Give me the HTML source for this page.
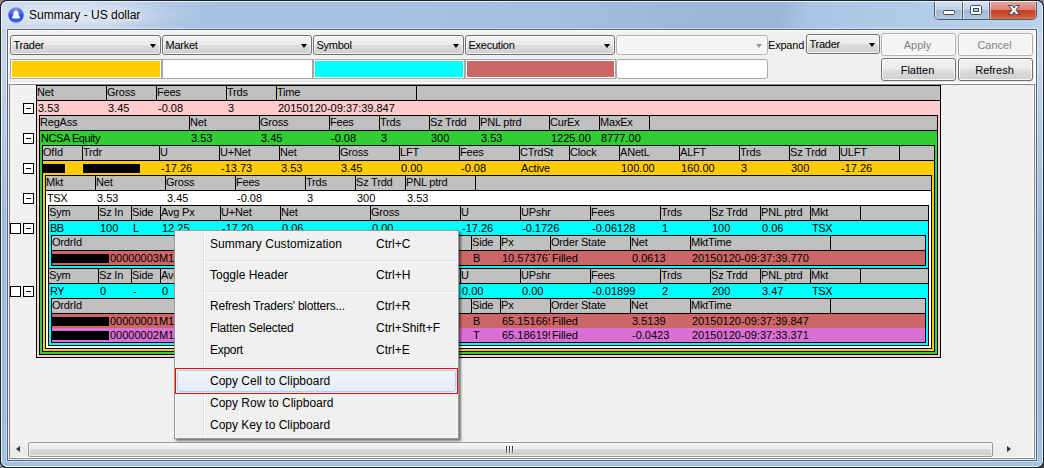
<!DOCTYPE html><html><head><meta charset="utf-8"><title>Summary - US dollar</title><style>html,body{margin:0;padding:0;background:#888;}
body{width:1044px;height:468px;overflow:hidden;position:relative;font-family:"Liberation Sans",sans-serif;}
#win{position:absolute;left:0;top:0;width:1044px;height:468px;box-sizing:border-box;border-radius:7px;overflow:hidden;background:linear-gradient(#c3d6ea 0,#c3d6ea 60px,#9bb9d9 230px,#9bb9d9 400px,#a5c3e3 100%);}
#tbar{left:0;top:0;width:1044px;height:29px;background:linear-gradient(100deg,#ccdbed 0px,#c6d7eb 110px,#b2c9e5 160px,#a8c3e2 200px,#a6c1e1 420px,#a3bfe0 560px,#9bb8d9 680px,#9ab7d8 770px,#a9c5e4 800px,#b2cbe7 900px,#bcd2ea 1044px);}
#win>*{position:absolute;}
#ob{left:0;top:0;width:1042px;height:466px;border:1px solid #1a222c;border-radius:7px;}
#hl{left:1px;top:1px;width:1040px;height:464px;border:1px solid rgba(255,255,255,.75);border-radius:6px;pointer-events:none;}
#client{left:7px;top:29px;width:1028px;height:430px;border:1px solid #56627a;background:#f0f0f0;box-shadow:0 0 0 1px rgba(255,255,255,.45);}
#tool{left:8px;top:30px;width:1028px;height:54px;background:#fff;}
#tool i{position:absolute;left:1px;top:1px;width:1025px;height:50px;background:#f0f0f0;border-bottom:1px solid #dde4ea;}
#title{left:29px;top:8px;font-size:12px;line-height:15px;color:#000;white-space:nowrap;text-shadow:0 0 6px rgba(255,255,255,.8),0 0 10px rgba(255,255,255,.6);}
#glow{left:-9px;top:1px;width:200px;height:28px;background:radial-gradient(ellipse at 40% 50%,rgba(255,255,255,.42),rgba(255,255,255,0) 72%);}
#icon{left:8px;top:7px;width:16px;height:16px;}
#ctl{left:934px;top:1px;width:103px;height:19px;box-sizing:border-box;border:1px solid #4d5a6b;border-top:none;border-radius:0 0 5px 5px;overflow:hidden;}
#ctl>div{position:absolute;top:0;height:19px;box-sizing:border-box;box-shadow:inset 1px 0 0 rgba(255,255,255,.55),inset -1px -1px 0 rgba(255,255,255,.35);}
#cmin{left:0;width:28px;border-right:1px solid #4d5a6b;background:linear-gradient(#d5e1f0 0,#c0d1e6 45%,#a2b8d3 50%,#b5c9e2 100%);}
#cmax{left:28px;width:27px;border-right:1px solid #4d5a6b;background:linear-gradient(#d5e1f0 0,#c0d1e6 45%,#a2b8d3 50%,#b5c9e2 100%);}
#ccls{left:55px;width:46px;background:linear-gradient(#e9aaa0 0,#d98474 45%,#c43d24 50%,#d2553a 80%,#dd8265 100%);}
#ctl svg{position:absolute;left:0;top:0;}
#panel{left:9px;top:84px;width:1024px;height:373px;border:1px solid #828790;background:#f0f0f0;box-shadow:inset -1px -1px 0 #fff;}
.combo{box-sizing:border-box;border:1px solid #707070;border-radius:3px;background:linear-gradient(#f2f2f2 0,#ebebeb 48%,#dddddd 52%,#cfcfcf 100%);font-size:11px;color:#000;box-shadow:inset 0 0 0 1px rgba(255,255,255,.7);}
.combo span{position:absolute;left:2.5px;top:2px;line-height:14px;white-space:nowrap;letter-spacing:-0.25px;}
.combo .arr{position:absolute;right:4px;top:8px;width:0;height:0;border-left:3.5px solid transparent;border-right:3.5px solid transparent;border-top:4px solid #000;}
.combo.sm .arr{top:8px;}
.combo.sm span{top:2px;}
.combo.dis{background:#f4f4f4;border-color:#adb2b5;}
.combo.dis .arr{border-top-color:#9a9a9a;right:5.5px;}
.lbl{font-size:11px;line-height:14px;color:#000;letter-spacing:-0.2px;}
.sw{top:59px;height:20px;box-sizing:border-box;border:1px solid #a8a8a8;box-shadow:inset 0 0 0 1px #fff;}
.btn{box-sizing:border-box;border:1px solid #707070;border-radius:3px;background:linear-gradient(#f2f2f2 0,#ebebeb 48%,#dddddd 52%,#cfcfcf 100%);font-size:11px;text-align:center;color:#000;padding-right:2px;box-shadow:inset 0 0 0 1px rgba(255,255,255,.8);}
.btn.dis{background:#f4f4f4;border-color:#adb2b5;color:#838383;}
/* grid */
.tbl{box-sizing:border-box;border:1px solid #000;font-size:11px;color:#000;}
.hdr{height:14px;background:#c0c0c0;border-bottom:1px solid #000;position:relative;overflow:hidden;}
.hdr.nt{border-top:1px solid #000;}
.row{height:14px;position:relative;overflow:hidden;}
.child{padding:0 2px 2px 2px;}
.hc,.dc{position:absolute;top:0;height:14px;line-height:14px;white-space:nowrap;overflow:hidden;box-sizing:border-box;padding-left:1px;}
.hc{top:-1px;padding-left:0;letter-spacing:-0.2px;}
.sep{position:absolute;top:0;width:1px;height:14px;background:#000;}
.red{position:absolute;top:3px;height:9px;background:#000;}
.bx{width:11px;height:11px;box-sizing:border-box;border:1px solid #000;background:#fff;}
.bx i{position:absolute;left:2px;top:4px;width:5px;height:1px;background:#000;}
/* menu */
.menu{left:174px;top:230px;width:285px;height:209px;box-sizing:border-box;border:1px solid #979797;background:#f0f0f0;box-shadow:2px 2px 2px rgba(0,0,0,.5),inset 0 0 0 1px #f8f8f8;font-size:12px;color:#000;}
.menu>*{position:absolute;}
.gut{left:28px;top:2px;width:1px;height:203px;background:#e2e3e3;border-right:1px solid #fff;}
.mi{left:2px;width:279px;height:22px;line-height:23px;box-sizing:border-box;margin-top:-231px;}
.mi .ml{position:absolute;left:33px;white-space:nowrap;}
.mi .ms{position:absolute;left:199px;white-space:nowrap;}
.mi.hot{border:1px solid #aecff7;border-radius:3px;background:linear-gradient(#f1f5fb,#e4ecf8);line-height:21px;}
.redbox{left:0px;top:137px;width:281px;height:24px;border:1px solid #f00;}
.mi.hot .ml{left:32px;}
.msep{left:30px;width:251px;height:1px;background:#e0e0e0;border-bottom:1px solid #fff;margin-top:-231px;}
/* scrollbar */
#hs{left:10px;top:441px;width:1007px;height:16px;background:linear-gradient(#f6f6f6 0,#ededed 2px,#ebebeb 100%);}
#hs>*{position:absolute;}
#thumb{left:18px;top:1px;width:965px;height:15px;box-sizing:border-box;border:1px solid #979797;border-radius:2px;background:linear-gradient(#f4f4f4 0,#ececec 45%,#d9d9d9 50%,#cdcdcd 100%);box-shadow:inset 0 0 0 1px rgba(255,255,255,.6);}
.la{left:6px;top:4.5px;width:0;height:0;border-top:3.5px solid transparent;border-bottom:3.5px solid transparent;border-right:4px solid #303030;}
.ra{left:997px;top:4.5px;width:0;height:0;border-top:3.5px solid transparent;border-bottom:3.5px solid transparent;border-left:4px solid #303030;}
.grip{left:496px;top:5px;width:8px;height:7px;background:linear-gradient(90deg,#000 0,#000 1px,#fff 1px,#fff 2px,transparent 2px,transparent 3px,#000 3px,#000 4px,#fff 4px,#fff 5px,transparent 5px,transparent 6px,#000 6px,#000 7px,#fff 7px,#fff 8px);-webkit-mask-image:linear-gradient(rgba(0,0,0,.85),rgba(0,0,0,.45));mask-image:linear-gradient(rgba(0,0,0,.85),rgba(0,0,0,.45));}

.cn{position:absolute;width:7px;height:7px;}
.cn.tl{left:0;top:0;background:radial-gradient(circle at 7px 7px,transparent 5.6px,#1a222c 6.3px,#1a222c 6.8px,#888 7.4px);}
.cn.tr{right:0;top:0;left:1037px;background:radial-gradient(circle at 0px 7px,transparent 5.6px,#1a222c 6.3px,#1a222c 6.8px,#888 7.4px);}
.cn.bl{left:0;top:461px;background:radial-gradient(circle at 7px 0px,transparent 5.6px,#1a222c 6.3px,#1a222c 6.8px,#888 7.4px);}
.cn.br{left:1037px;top:461px;background:radial-gradient(circle at 0px 0px,transparent 5.6px,#1a222c 6.3px,#1a222c 6.8px,#444 7.4px);}
</style></head><body><div id="win"><div id="tbar"></div><div id="glow"></div>
<svg id="icon" viewBox="0 0 16 16"><defs><linearGradient id="ig" x1="0" y1="0" x2="0" y2="1"><stop offset="0" stop-color="#8497ea"/><stop offset="0.45" stop-color="#3d5ce6"/><stop offset="0.6" stop-color="#2a4fe0"/><stop offset="1" stop-color="#3a70f0"/></linearGradient></defs><circle cx="8" cy="8" r="7.800" fill="url(#ig)"/><path d="M8 3.600c-1.700 0-2.500 1.500-2.600 3.200-.1 1.800-.7 2.900-1.600 3.700 0 .5.400.700 1 .700 1 0 2 .5 3.200.5s2.200-.5 3.200-.5c.6 0 1-.2 1-.700-.9-.8-1.500-1.900-1.600-3.700-.1-1.700-.9-3.200-2.600-3.200z" fill="#fff"/></svg>
<div id="title">Summary - US dollar</div>
<div id="ctl"><div id="cmin"><svg width="28" height="19"><rect x="8.500" y="9.500" width="11" height="4" rx="1" fill="#fff" stroke="#3f4a5a"/></svg></div><div id="cmax"><svg width="27" height="19"><rect x="7.500" y="4.500" width="11" height="9" rx="1" fill="#fff" stroke="#3f4a5a"/><rect x="10.500" y="7.500" width="5" height="3" fill="#b7c9e0" stroke="#3f4a5a"/></svg></div><div id="ccls"><svg width="47" height="19"><path d="M18.500 4.500h3.600l1.900 2.500 1.900-2.500h3.600l-3.600 4.500 3.600 4.500h-3.600l-1.900-2.500-1.900 2.500h-3.600l3.600-4.500z" fill="#fff" stroke="#3f4a5a" stroke-width="1"/></svg></div></div>
<div id="client"></div><div id="tool"><i></i></div><div id="ob"></div><div id="hl"></div>
<div class="combo " style="left:10px;top:35px;width:151px;height:20px"><span>Trader</span><i class="arr"></i></div><div class="combo " style="left:162px;top:35px;width:150px;height:20px"><span>Market</span><i class="arr"></i></div><div class="combo " style="left:313px;top:35px;width:151px;height:20px"><span>Symbol</span><i class="arr"></i></div><div class="combo " style="left:465px;top:35px;width:150px;height:20px"><span>Execution</span><i class="arr"></i></div><div class="combo dis " style="left:616px;top:35px;width:152px;height:20px"><span></span><i class="arr"></i></div><div class="lbl" style="left:768px;top:38px">Expand</div><div class="combo sm" style="left:806px;top:34px;width:74px;height:20px"><span>Trader</span><i class="arr"></i></div><div class="btn dis" style="left:881px;top:33px;width:75px;height:23px;line-height:23px">Apply</div><div class="btn dis" style="left:958px;top:33px;width:75px;height:23px;line-height:23px">Cancel</div><div class="btn" style="left:881px;top:58px;width:75px;height:23px;line-height:23px">Flatten</div><div class="btn" style="left:958px;top:58px;width:75px;height:23px;line-height:23px">Refresh</div><div class="sw" style="left:10px;width:152px;background:#ffcc00;border-radius:0px"></div><div class="sw" style="left:162px;width:151px;background:#ffffff;border-radius:0px"></div><div class="sw" style="left:313px;width:152px;background:#00ffff;border-radius:0px"></div><div class="sw" style="left:465px;width:151px;background:#cd6666;border-radius:0px"></div><div class="sw" style="left:616px;width:152px;background:#ffffff;border-radius:3px"></div><div id="panel"></div><div class="tbl" style="position:absolute;left:36px;top:85px;width:905px"><div class="hdr"><span class="hc" style="left:0px;width:69px">Net</span><i class="sep" style="left:69px"></i><span class="hc" style="left:70px;width:49px">Gross</span><i class="sep" style="left:119px"></i><span class="hc" style="left:120px;width:69px">Fees</span><i class="sep" style="left:189px"></i><span class="hc" style="left:190px;width:49px">Trds</span><i class="sep" style="left:239px"></i><span class="hc" style="left:240px;width:139px">Time</span><i class="sep" style="left:379px"></i></div><div class="row" style="background:#ffcccc"><span class="dc" style="left:0px;width:69px">3.53</span><span class="dc" style="left:70px;width:49px">3.45</span><span class="dc" style="left:120px;width:69px">-0.08</span><span class="dc" style="left:190px;width:49px">3</span><span class="dc" style="left:240px;width:139px">20150120-09:37:39.847</span></div><div class="child" style="background:#ffcccc"><div class="tbl"><div class="hdr"><span class="hc" style="left:0px;width:149px">RegAss</span><i class="sep" style="left:149px"></i><span class="hc" style="left:150px;width:69px">Net</span><i class="sep" style="left:219px"></i><span class="hc" style="left:220px;width:69px">Gross</span><i class="sep" style="left:289px"></i><span class="hc" style="left:290px;width:49px">Fees</span><i class="sep" style="left:339px"></i><span class="hc" style="left:340px;width:49px">Trds</span><i class="sep" style="left:389px"></i><span class="hc" style="left:390px;width:49px">Sz Trdd</span><i class="sep" style="left:439px"></i><span class="hc" style="left:440px;width:69px">PNL ptrd</span><i class="sep" style="left:509px"></i><span class="hc" style="left:510px;width:49px">CurEx</span><i class="sep" style="left:559px"></i><span class="hc" style="left:560px;width:49px">MaxEx</span><i class="sep" style="left:609px"></i></div><div class="row" style="background:#32cd32"><span class="dc" style="left:0px;width:149px;letter-spacing:-0.42px">NCSA Equity</span><span class="dc" style="left:150px;width:69px">3.53</span><span class="dc" style="left:220px;width:69px">3.45</span><span class="dc" style="left:290px;width:49px">-0.08</span><span class="dc" style="left:340px;width:49px">3</span><span class="dc" style="left:390px;width:49px">300</span><span class="dc" style="left:440px;width:69px">3.53</span><span class="dc" style="left:510px;width:49px">1225.00</span><span class="dc" style="left:560px;width:49px">8777.00</span></div><div class="child" style="background:#32cd32"><div class="tbl"><div class="hdr"><span class="hc" style="left:0px;width:39px">OfId</span><i class="sep" style="left:39px"></i><span class="hc" style="left:40px;width:76px">Trdr</span><i class="sep" style="left:116px"></i><span class="hc" style="left:117px;width:59px">U</span><i class="sep" style="left:176px"></i><span class="hc" style="left:177px;width:59px">U+Net</span><i class="sep" style="left:236px"></i><span class="hc" style="left:237px;width:59px">Net</span><i class="sep" style="left:296px"></i><span class="hc" style="left:297px;width:59px">Gross</span><i class="sep" style="left:356px"></i><span class="hc" style="left:357px;width:59px">LFT</span><i class="sep" style="left:416px"></i><span class="hc" style="left:417px;width:59px">Fees</span><i class="sep" style="left:476px"></i><span class="hc" style="left:477px;width:49px">CTrdSt</span><i class="sep" style="left:526px"></i><span class="hc" style="left:527px;width:49px">Clock</span><i class="sep" style="left:576px"></i><span class="hc" style="left:577px;width:59px">ANetL</span><i class="sep" style="left:636px"></i><span class="hc" style="left:637px;width:59px">ALFT</span><i class="sep" style="left:696px"></i><span class="hc" style="left:697px;width:49px">Trds</span><i class="sep" style="left:746px"></i><span class="hc" style="left:747px;width:49px">Sz Trdd</span><i class="sep" style="left:796px"></i><span class="hc" style="left:797px;width:59px">ULFT</span><i class="sep" style="left:856px"></i></div><div class="row" style="background:#ffcc00"><span class="dc" style="left:117px;width:59px">-17.26</span><span class="dc" style="left:177px;width:59px">-13.73</span><span class="dc" style="left:237px;width:59px">3.53</span><span class="dc" style="left:297px;width:59px">3.45</span><span class="dc" style="left:357px;width:59px">0.00</span><span class="dc" style="left:417px;width:59px">-0.08</span><span class="dc" style="left:477px;width:49px;letter-spacing:-0.15px">Active</span><span class="dc" style="left:577px;width:59px">100.00</span><span class="dc" style="left:637px;width:59px">160.00</span><span class="dc" style="left:697px;width:49px">3</span><span class="dc" style="left:747px;width:49px">300</span><span class="dc" style="left:797px;width:59px">-17.26</span><b class="red" style="left:0px;width:22px"></b><b class="red" style="left:40px;width:57px"></b></div><div class="child" style="background:#ffcc00"><div class="tbl"><div class="hdr"><span class="hc" style="left:0px;width:49px">Mkt</span><i class="sep" style="left:49px"></i><span class="hc" style="left:50px;width:69px">Net</span><i class="sep" style="left:119px"></i><span class="hc" style="left:120px;width:69px">Gross</span><i class="sep" style="left:189px"></i><span class="hc" style="left:190px;width:69px">Fees</span><i class="sep" style="left:259px"></i><span class="hc" style="left:260px;width:49px">Trds</span><i class="sep" style="left:309px"></i><span class="hc" style="left:310px;width:49px">Sz Trdd</span><i class="sep" style="left:359px"></i><span class="hc" style="left:360px;width:69px">PNL ptrd</span><i class="sep" style="left:429px"></i></div><div class="row" style="background:#ffffff"><span class="dc" style="left:0px;width:49px;letter-spacing:-0.40px">TSX</span><span class="dc" style="left:50px;width:69px">3.53</span><span class="dc" style="left:120px;width:69px">3.45</span><span class="dc" style="left:190px;width:69px">-0.08</span><span class="dc" style="left:260px;width:49px">3</span><span class="dc" style="left:310px;width:49px">300</span><span class="dc" style="left:360px;width:69px">3.53</span></div><div class="child" style="background:#ffffff"><div class="tbl" style="background:#00ffff"><div class="hdr"><span class="hc" style="left:0px;width:49px">Sym</span><i class="sep" style="left:49px"></i><span class="hc" style="left:50px;width:32px">Sz In</span><i class="sep" style="left:82px"></i><span class="hc" style="left:83px;width:28px">Side</span><i class="sep" style="left:111px"></i><span class="hc" style="left:112px;width:59px">Avg Px</span><i class="sep" style="left:171px"></i><span class="hc" style="left:172px;width:59px">U+Net</span><i class="sep" style="left:231px"></i><span class="hc" style="left:232px;width:89px">Net</span><i class="sep" style="left:321px"></i><span class="hc" style="left:322px;width:89px">Gross</span><i class="sep" style="left:411px"></i><span class="hc" style="left:412px;width:59px">U</span><i class="sep" style="left:471px"></i><span class="hc" style="left:472px;width:69px">UPshr</span><i class="sep" style="left:541px"></i><span class="hc" style="left:542px;width:69px">Fees</span><i class="sep" style="left:611px"></i><span class="hc" style="left:612px;width:49px">Trds</span><i class="sep" style="left:661px"></i><span class="hc" style="left:662px;width:49px">Sz Trdd</span><i class="sep" style="left:711px"></i><span class="hc" style="left:712px;width:49px">PNL ptrd</span><i class="sep" style="left:761px"></i><span class="hc" style="left:762px;width:49px">Mkt</span><i class="sep" style="left:811px"></i></div><div class="row" style="background:#00ffff"><span class="dc" style="left:0px;width:49px;letter-spacing:-0.60px">BB</span><span class="dc" style="left:50px;width:32px">100</span><span class="dc" style="left:83px;width:28px">L</span><span class="dc" style="left:112px;width:59px">12.25</span><span class="dc" style="left:172px;width:59px">-17.20</span><span class="dc" style="left:232px;width:89px">0.06</span><span class="dc" style="left:322px;width:89px">0.00</span><span class="dc" style="left:412px;width:59px">-17.26</span><span class="dc" style="left:472px;width:69px">-0.1726</span><span class="dc" style="left:542px;width:69px">-0.06128</span><span class="dc" style="left:612px;width:49px">1</span><span class="dc" style="left:662px;width:49px">100</span><span class="dc" style="left:712px;width:49px">0.06</span><span class="dc" style="left:762px;width:49px;letter-spacing:-0.40px">TSX</span></div><div class="child"><div class="tbl"><div class="hdr"><span class="hc" style="left:0px;width:149px">OrdrId</span><i class="sep" style="left:149px"></i><span class="hc" style="left:150px;width:59px">Trdr</span><i class="sep" style="left:209px"></i><span class="hc" style="left:210px;width:49px">Sym</span><i class="sep" style="left:259px"></i><span class="hc" style="left:260px;width:49px">Sz</span><i class="sep" style="left:309px"></i><span class="hc" style="left:310px;width:59px">Sz Lft</span><i class="sep" style="left:369px"></i><span class="hc" style="left:370px;width:49px">Crncy</span><i class="sep" style="left:419px"></i><span class="hc" style="left:420px;width:28px">Side</span><i class="sep" style="left:448px"></i><span class="hc" style="left:449px;width:49px">Px</span><i class="sep" style="left:498px"></i><span class="hc" style="left:499px;width:79px">Order State</span><i class="sep" style="left:578px"></i><span class="hc" style="left:579px;width:59px">Net</span><i class="sep" style="left:638px"></i><span class="hc" style="left:639px;width:139px">MktTime</span><i class="sep" style="left:778px"></i></div><div class="row" style="background:#cd6666"><span class="dc" style="left:57px;width:92px">00000003M17012</span><span class="dc" style="left:210px;width:49px;letter-spacing:-0.60px">BB</span><span class="dc" style="left:260px;width:49px">100</span><span class="dc" style="left:310px;width:59px">0</span><span class="dc" style="left:370px;width:49px">CAD</span><span class="dc" style="left:420px;width:28px">B</span><span class="dc" style="left:449px;width:49px">10.573767</span><span class="dc" style="left:499px;width:79px;letter-spacing:-0.10px">Filled</span><span class="dc" style="left:579px;width:59px">0.0613</span><span class="dc" style="left:639px;width:139px">20150120-09:37:39.770</span><b class="red" style="left:0px;width:57px"></b></div></div></div><div class="hdr nt"><span class="hc" style="left:0px;width:49px">Sym</span><i class="sep" style="left:49px"></i><span class="hc" style="left:50px;width:32px">Sz In</span><i class="sep" style="left:82px"></i><span class="hc" style="left:83px;width:28px">Side</span><i class="sep" style="left:111px"></i><span class="hc" style="left:112px;width:59px">Avg Px</span><i class="sep" style="left:171px"></i><span class="hc" style="left:172px;width:59px">U+Net</span><i class="sep" style="left:231px"></i><span class="hc" style="left:232px;width:89px">Net</span><i class="sep" style="left:321px"></i><span class="hc" style="left:322px;width:89px">Gross</span><i class="sep" style="left:411px"></i><span class="hc" style="left:412px;width:59px">U</span><i class="sep" style="left:471px"></i><span class="hc" style="left:472px;width:69px">UPshr</span><i class="sep" style="left:541px"></i><span class="hc" style="left:542px;width:69px">Fees</span><i class="sep" style="left:611px"></i><span class="hc" style="left:612px;width:49px">Trds</span><i class="sep" style="left:661px"></i><span class="hc" style="left:662px;width:49px">Sz Trdd</span><i class="sep" style="left:711px"></i><span class="hc" style="left:712px;width:49px">PNL ptrd</span><i class="sep" style="left:761px"></i><span class="hc" style="left:762px;width:49px">Mkt</span><i class="sep" style="left:811px"></i></div><div class="row" style="background:#00ffff"><span class="dc" style="left:0px;width:49px;letter-spacing:-0.40px">RY</span><span class="dc" style="left:50px;width:32px">0</span><span class="dc" style="left:83px;width:28px">-</span><span class="dc" style="left:112px;width:59px">0</span><span class="dc" style="left:172px;width:59px">3.47</span><span class="dc" style="left:232px;width:89px">3.47</span><span class="dc" style="left:322px;width:89px">3.45</span><span class="dc" style="left:412px;width:59px">0.00</span><span class="dc" style="left:472px;width:69px">0.00</span><span class="dc" style="left:542px;width:69px">-0.01899</span><span class="dc" style="left:612px;width:49px">2</span><span class="dc" style="left:662px;width:49px">200</span><span class="dc" style="left:712px;width:49px">3.47</span><span class="dc" style="left:762px;width:49px;letter-spacing:-0.40px">TSX</span></div><div class="child"><div class="tbl"><div class="hdr"><span class="hc" style="left:0px;width:149px">OrdrId</span><i class="sep" style="left:149px"></i><span class="hc" style="left:150px;width:59px">Trdr</span><i class="sep" style="left:209px"></i><span class="hc" style="left:210px;width:49px">Sym</span><i class="sep" style="left:259px"></i><span class="hc" style="left:260px;width:49px">Sz</span><i class="sep" style="left:309px"></i><span class="hc" style="left:310px;width:59px">Sz Lft</span><i class="sep" style="left:369px"></i><span class="hc" style="left:370px;width:49px">Crncy</span><i class="sep" style="left:419px"></i><span class="hc" style="left:420px;width:28px">Side</span><i class="sep" style="left:448px"></i><span class="hc" style="left:449px;width:49px">Px</span><i class="sep" style="left:498px"></i><span class="hc" style="left:499px;width:79px">Order State</span><i class="sep" style="left:578px"></i><span class="hc" style="left:579px;width:59px">Net</span><i class="sep" style="left:638px"></i><span class="hc" style="left:639px;width:139px">MktTime</span><i class="sep" style="left:778px"></i></div><div class="row" style="background:#cd6666"><span class="dc" style="left:57px;width:92px">00000001M17012</span><span class="dc" style="left:210px;width:49px;letter-spacing:-0.40px">RY</span><span class="dc" style="left:260px;width:49px">100</span><span class="dc" style="left:310px;width:59px">0</span><span class="dc" style="left:370px;width:49px">CAD</span><span class="dc" style="left:420px;width:28px">B</span><span class="dc" style="left:449px;width:49px">65.151669</span><span class="dc" style="left:499px;width:79px;letter-spacing:-0.10px">Filled</span><span class="dc" style="left:579px;width:59px">3.5139</span><span class="dc" style="left:639px;width:139px">20150120-09:37:39.847</span><b class="red" style="left:0px;width:57px"></b></div><div class="row" style="background:#da70d6"><span class="dc" style="left:57px;width:92px">00000002M17012</span><span class="dc" style="left:210px;width:49px;letter-spacing:-0.40px">RY</span><span class="dc" style="left:260px;width:49px">100</span><span class="dc" style="left:310px;width:59px">0</span><span class="dc" style="left:370px;width:49px">CAD</span><span class="dc" style="left:420px;width:28px">T</span><span class="dc" style="left:449px;width:49px">65.186195</span><span class="dc" style="left:499px;width:79px;letter-spacing:-0.10px">Filled</span><span class="dc" style="left:579px;width:59px">-0.0423</span><span class="dc" style="left:639px;width:139px">20150120-09:37:33.371</span><b class="red" style="left:0px;width:57px"></b></div></div></div></div></div></div></div></div></div></div></div></div><div class="bx" style="left:23px;top:103px"><i></i></div><div class="bx" style="left:23px;top:133px"><i></i></div><div class="bx" style="left:23px;top:163px"><i></i></div><div class="bx" style="left:23px;top:193px"><i></i></div><div class="bx" style="left:10px;top:223px"></div><div class="bx" style="left:23px;top:223px"><i></i></div><div class="bx" style="left:10px;top:286px"></div><div class="bx" style="left:23px;top:286px"><i></i></div><div id="hs"><i class="la"></i><div id="thumb"></div><i class="grip"></i><i class="ra"></i></div>
<div class="menu"><div class="gut"></div><div class="mi" style="top:233px"><span class="ml" style="letter-spacing:0.06px">Summary Customization</span><span class="ms">Ctrl+C</span></div><div class="msep" style="top:260px"></div><div class="mi" style="top:264px"><span class="ml" style="letter-spacing:0.00px">Toggle Header</span><span class="ms">Ctrl+H</span></div><div class="msep" style="top:291px"></div><div class="mi" style="top:295px"><span class="ml" style="letter-spacing:-0.22px">Refresh Traders' blotters...</span><span class="ms">Ctrl+R</span></div><div class="mi" style="top:317px"><span class="ml" style="letter-spacing:-0.20px">Flatten Selected</span><span class="ms">Ctrl+Shift+F</span></div><div class="mi" style="top:339px"><span class="ml" style="letter-spacing:-0.30px">Export</span><span class="ms">Ctrl+E</span></div><div class="msep" style="top:366px"></div><div class="mi hot" style="top:370px"><span class="ml" style="letter-spacing:0.00px">Copy Cell to Clipboard</span><span class="ms"></span></div><div class="mi" style="top:392px"><span class="ml" style="letter-spacing:0.00px">Copy Row to Clipboard</span><span class="ms"></span></div><div class="mi" style="top:414px"><span class="ml" style="letter-spacing:0.00px">Copy Key to Clipboard</span><span class="ms"></span></div><div class="redbox"></div></div></div><div class="cn tl"></div><div class="cn tr"></div><div class="cn bl"></div><div class="cn br"></div></body></html>
